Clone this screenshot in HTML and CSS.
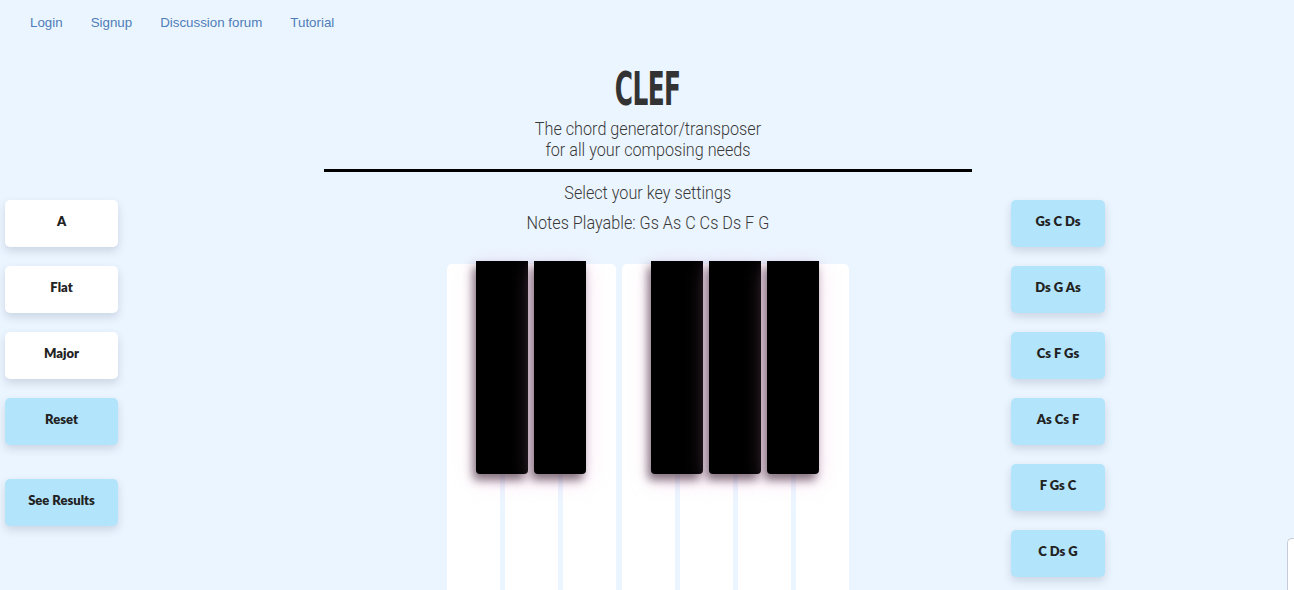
FILE: index.html
```html
<!DOCTYPE html>
<html>
<head>
<meta charset="utf-8">
<title>Clef</title>
<link rel="stylesheet" href="styles.css">
</head>
<body>
<nav class="nav">
  <a href="#">Login</a>
  <a href="#">Signup</a>
  <a href="#">Discussion forum</a>
  <a href="#">Tutorial</a>
</nav>
<main class="layout">
  <header class="header">
    <h1 class="title">CLEF</h1>
    <p class="subtitle">The chord generator/transposer<br>for all your composing needs</p>
    <hr class="rule">
  </header>
  <aside class="left">
    <button class="btn">A</button>
    <button class="btn">Flat</button>
    <button class="btn">Major</button>
    <button class="btn blue">Reset</button>
    <button class="btn blue results">See Results</button>
  </aside>
  <section class="center">
    <p class="info">Select your key settings</p>
    <p class="info">Notes Playable: Gs As C Cs Ds F G</p>
    <div class="piano">
      <div class="white"><div class="black"></div></div>
      <div class="white"><div class="black"></div></div>
      <div class="white"></div>
      <div class="white"><div class="black"></div></div>
      <div class="white"><div class="black"></div></div>
      <div class="white"><div class="black"></div></div>
      <div class="white"></div>
    </div>
  </section>
  <aside class="right">
    <button class="btn blue chord">Gs C Ds</button>
    <button class="btn blue chord">Ds G As</button>
    <button class="btn blue chord">Cs F Gs</button>
    <button class="btn blue chord">As Cs F</button>
    <button class="btn blue chord">F Gs C</button>
    <button class="btn blue chord">C Ds G</button>
  </aside>
</main>
<div class="edge"></div>
</body>
</html>
```
FILE: styles.css
```css
html { overflow: hidden; }
body {
  margin: 0;
  background: #ebf5ff;
  font-family: "Liberation Sans", Arial, sans-serif;
  position: relative;
  min-height: 590px;
}
.nav {
  display: flex;
  gap: 28px;
  padding: 15px 0 0 30px;
  height: 21px;
}
.nav a {
  color: #4f7db8;
  text-decoration: none;
  font-size: 13.33px;
  line-height: 16px;
}
.layout {
  display: grid;
  grid-template-columns: 324px 648px 1fr;
  grid-template-rows: auto auto;
}
.header {
  grid-column: 2;
  grid-row: 1;
  text-align: center;
}
.title {
  margin: 30px 0 0;
  font-family: "DejaVu Sans Condensed", "Liberation Sans", sans-serif;
  font-stretch: condensed;
  font-weight: 700;
  font-size: 46px;
  line-height: 46px;
  color: #333;
  display: inline-block;
  transform: scaleX(0.6);
  letter-spacing: -1px;
}
.subtitle {
  margin: 6px 0 0;
  font-family: Roboto, sans-serif;
  font-weight: 300;
  font-size: 18px;
  line-height: 21px;
  color: #3a3a3a;
  transform: scaleX(0.9);
}
.rule {
  margin: 9px 0 0;
  border: 0;
  height: 3px;
  background: #000;
}
.left {
  grid-column: 1;
  grid-row: 2;
  display: flex;
  flex-direction: column;
  align-items: flex-start;
  gap: 19px;
  padding: 28px 0 0 5px;
}
.right {
  grid-column: 3;
  grid-row: 2;
  display: flex;
  flex-direction: column;
  align-items: flex-start;
  gap: 19px;
  padding: 28px 0 0 39px;
}
.btn {
  width: 113px;
  height: 47px;
  border: 0;
  border-radius: 5px;
  background: #fff;
  box-shadow: 0 4px 9px rgba(40, 50, 90, 0.16);
  font-family: Lato, "Open Sans", sans-serif;
  font-weight: 800;
  font-size: 13px;
  color: #222;
  padding: 0 0 6px;
}
.btn.blue { background: #b2e4fb; }
.btn.results { margin-top: 15px; }
.btn.chord { width: 94px; }
.center {
  grid-column: 2;
  grid-row: 2;
  display: flex;
  flex-direction: column;
  align-items: center;
}
.info {
  margin: 0;
  font-family: Roboto, sans-serif;
  font-weight: 300;
  font-size: 18px;
  line-height: 30px;
  color: #3a3a3a;
  transform: scaleX(0.9);
}
.info:first-child { margin-top: 6px; }
.piano {
  margin-top: 26px;
  display: flex;
  gap: 5px;
  width: 402px;
}
.white {
  position: relative;
  flex: 1;
  height: 340px;
  background: #fff;
  border-radius: 5px 5px 0 0;
}
.white:nth-child(3) { margin-right: 1px; }
.black {
  position: absolute;
  z-index: 2;
  top: -3px;
  right: -28px;
  width: 52px;
  height: 213px;
  background: #000;
  border-radius: 0 0 4px 4px;
  box-shadow: -3px 6px 10px rgba(50, 30, 45, 0.6), 0 6px 22px rgba(240, 170, 220, 0.4);
}
.edge {
  position: absolute;
  right: 0;
  top: 538px;
  width: 6px;
  height: 60px;
  background: #fff;
  border: 1px solid #c8ccd6;
  border-right: 0;
  border-radius: 5px 0 0 0;
}
```
